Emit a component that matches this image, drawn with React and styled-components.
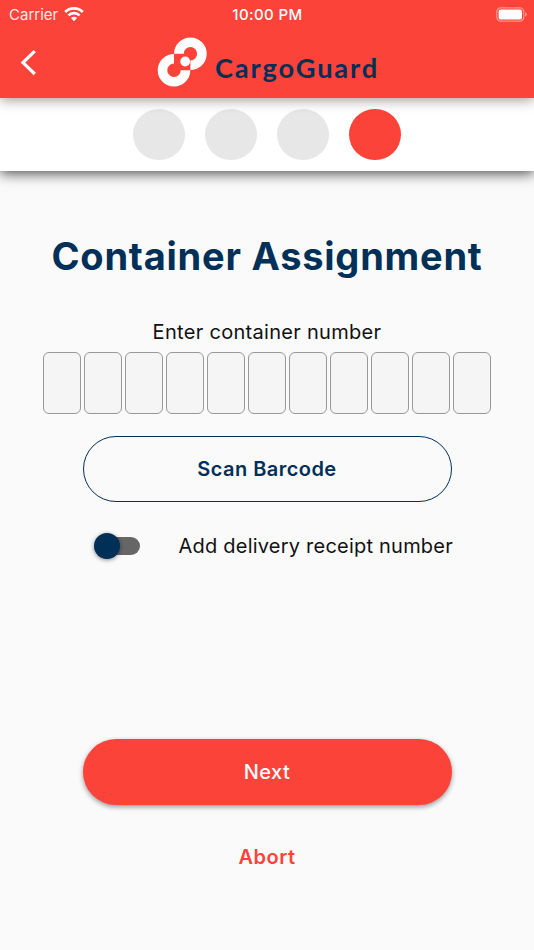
import React, { useState } from "react";
import styled, { createGlobalStyle, ThemeProvider } from "styled-components";

const theme = {
  primary: "#fb433a",
  navy: "#002f57",
  text: "#111111",
  background: "#fafafa",
  step: "#e7e7e7",
};

const GlobalStyle = createGlobalStyle`
  * {
    box-sizing: border-box;
  }

  body {
    margin: 0;
    background: ${theme.background};
    font-family: Inter, "Liberation Sans", sans-serif;
  }

  button {
    font-family: inherit;
    cursor: pointer;
  }
`;

const Screen = styled.div`
  display: flex;
  flex-direction: column;
  width: 534px;
  height: 950px;
  overflow: hidden;
  background: ${({ theme }) => theme.background};
`;

const Header = styled.header`
  position: relative;
  z-index: 2;
  flex: none;
  height: 98px;
  background: ${({ theme }) => theme.primary};
  box-shadow: 0 2px 12px rgba(0, 0, 0, 0.4);
`;

const StatusBar = styled.div`
  display: grid;
  grid-template-columns: 1fr auto 1fr;
  align-items: center;
  height: 28px;
  padding: 0 6px 0 9px;
  color: #fff;
  font-size: 15px;
`;

const Carrier = styled.div`
  display: flex;
  align-items: center;
  gap: 6px;
  color: #ffe9e8;
`;

const Time = styled.div`
  margin-right: 2px;
  font-weight: 500;
  letter-spacing: 0.4px;
`;

const Battery = styled.svg`
  justify-self: end;
`;

const NavBar = styled.div`
  display: grid;
  grid-template-columns: 60px 1fr 60px;
  align-items: center;
  height: 70px;
`;

const BackButton = styled.button`
  display: flex;
  padding: 0 0 0 18px;
  border: 0;
  background: none;
`;

const Logo = styled.svg`
  justify-self: center;
  display: block;
`;

const Steps = styled.div`
  position: relative;
  z-index: 1;
  display: flex;
  flex: none;
  align-items: center;
  justify-content: center;
  gap: 20.6px;
  height: 72.5px;
  background: #fff;
  box-shadow: 0 2px 13px rgba(0, 0, 0, 0.75);
`;

const Step = styled.div`
  width: 51.5px;
  height: 51.5px;
  border-radius: 50%;
  background: ${({ theme, $active }) => ($active ? theme.primary : theme.step)};
`;

const Content = styled.main`
  display: flex;
  flex-direction: column;
  align-items: center;
  padding-top: 61px;
`;

const Title = styled.h1`
  margin: 0;
  color: ${({ theme }) => theme.navy};
  font-size: 38px;
  font-weight: 700;
  line-height: 48px;
  letter-spacing: 0.77px;
  white-space: nowrap;
`;

const Label = styled.div`
  color: ${({ theme }) => theme.text};
  font-size: 20px;
  line-height: 26px;
  letter-spacing: ${({ $tight }) => ($tight ? "0.22px" : "0.3px")};
  white-space: nowrap;
`;

const NumberLabel = styled(Label)`
  margin-top: 39px;
`;

const Digits = styled.div`
  display: flex;
  gap: 3px;
  margin-top: 7px;
`;

const Digit = styled.input`
  width: 38px;
  height: 62px;
  padding: 0;
  border: 1.5px solid #989898;
  border-radius: 6px;
  background: #f5f5f5;
  font: inherit;
  font-size: 22px;
  text-align: center;
`;

const Button = styled.button`
  width: 369px;
  height: 66px;
  padding: 0;
  border: 0;
  border-radius: 33px;
  font-size: 20px;
  font-weight: 600;
  letter-spacing: 0.45px;
`;

const ScanButton = styled(Button)`
  margin-top: 22px;
  border: 1.4px solid ${({ theme }) => theme.navy};
  background: none;
  color: ${({ theme }) => theme.navy};
`;

const NextButton = styled(Button)`
  margin-top: 180px;
  background: ${({ theme }) => theme.primary};
  color: #fff;
  font-weight: 500;
  letter-spacing: 0.5px;
  box-shadow: 0 2px 5px rgba(0, 0, 0, 0.4);
`;

const AbortButton = styled(Button)`
  margin-top: 19px;
  background: none;
  color: ${({ theme }) => theme.primary};
`;

const Receipt = styled.div`
  display: flex;
  align-items: center;
  gap: 39px;
  width: 369px;
  margin-top: 31px;
  padding-left: 11px;
`;

const Switch = styled.button`
  display: flex;
  flex: none;
  align-items: center;
  justify-content: ${({ $on }) => ($on ? "flex-end" : "flex-start")};
  width: 40px;
  height: 18px;
  padding: 0;
  margin-left: 6px;
  border: 0;
  border-radius: 9px;
  background: #666;
`;

const Thumb = styled.span`
  flex: none;
  width: 26px;
  height: 26px;
  margin-left: -6px;
  border-radius: 50%;
  background: ${({ theme }) => theme.navy};
  box-shadow: 0 1px 4px rgba(0, 0, 0, 0.45);
`;

const WifiIcon = () => (
  <svg width="20" height="15" viewBox="0 0 20 15" fill="none" stroke="#fff" strokeWidth="2.6">
    <path d="M1.2 5C6 .1 14 .1 18.8 5" />
    <path d="M4.4 8.4C7.5 5.3 12.5 5.3 15.6 8.4" />
    <path d="M6.9 11L10 14.3L13.1 11C11.4 9.3 8.6 9.3 6.9 11Z" fill="#fff" stroke="none" />
  </svg>
);

const BatteryIcon = () => (
  <Battery width="32" height="15" viewBox="0 0 32 15">
    <rect x=".8" y=".8" width="27" height="13.4" rx="4" fill="none" stroke="#fff" strokeOpacity=".45" strokeWidth="1.2" />
    <rect x="2.6" y="2.6" width="23.4" height="9.8" rx="2" fill="#fff" />
    <path d="M29.2 5.2Q30.8 6 30.8 7.5T29.2 9.8Z" fill="#fff" fillOpacity=".5" />
  </Battery>
);

const CargoGuardLogo = () => (
  <Logo width="224" height="56" viewBox="155 35 224 56">
    {/* two three-quarter links around a dot */}
    <g fill="none" stroke="#fff" strokeWidth="9.6">
      <path d="M178.9 53.8A11.5 11.5 0 1 1 190.4 65.3" />
      <path d="M174 58.7A11.5 11.5 0 1 0 185.5 70.2" />
    </g>
    <circle cx="185.2" cy="61.5" r="4.9" fill="#fff" />
    <text
      x="215"
      y="78.3"
      textLength="164"
      lengthAdjust="spacingAndGlyphs"
      fill={theme.navy}
      fontFamily="Lato, sans-serif"
      fontSize="26"
      fontWeight="700"
      letterSpacing="1.8"
    >
      CargoGuard
    </text>
  </Logo>
);

const App = () => {
  const [withReceipt, setWithReceipt] = useState(false);

  return (
    <ThemeProvider theme={theme}>
      <GlobalStyle />
      <Screen>
        <Header>
          <StatusBar>
            <Carrier>
              Carrier
              <WifiIcon />
            </Carrier>
            <Time>10:00 PM</Time>
            <BatteryIcon />
          </StatusBar>
          <NavBar>
            <BackButton aria-label="Back">
              <svg width="20" height="28" viewBox="0 0 20 28" fill="none" stroke="#fff" strokeWidth="3.2">
                <path d="M16.8 2.2L5 13.6L16.8 25" />
              </svg>
            </BackButton>
            <CargoGuardLogo />
          </NavBar>
        </Header>
        <Steps>
          {[1, 2, 3, 4].map((step) => (
            <Step key={step} $active={step === 4} />
          ))}
        </Steps>
        <Content>
          <Title>Container Assignment</Title>
          <NumberLabel>Enter container number</NumberLabel>
          <Digits>
            {Array.from({ length: 11 }, (_, i) => (
              <Digit key={i} maxLength={1} aria-label={`Character ${i + 1}`} />
            ))}
          </Digits>
          <ScanButton>Scan Barcode</ScanButton>
          <Receipt>
            <Switch
              role="switch"
              aria-checked={withReceipt}
              $on={withReceipt}
              onClick={() => setWithReceipt(!withReceipt)}
            >
              <Thumb />
            </Switch>
            <Label $tight>Add delivery receipt number</Label>
          </Receipt>
          <NextButton>Next</NextButton>
          <AbortButton>Abort</AbortButton>
        </Content>
      </Screen>
    </ThemeProvider>
  );
};

export default App;
